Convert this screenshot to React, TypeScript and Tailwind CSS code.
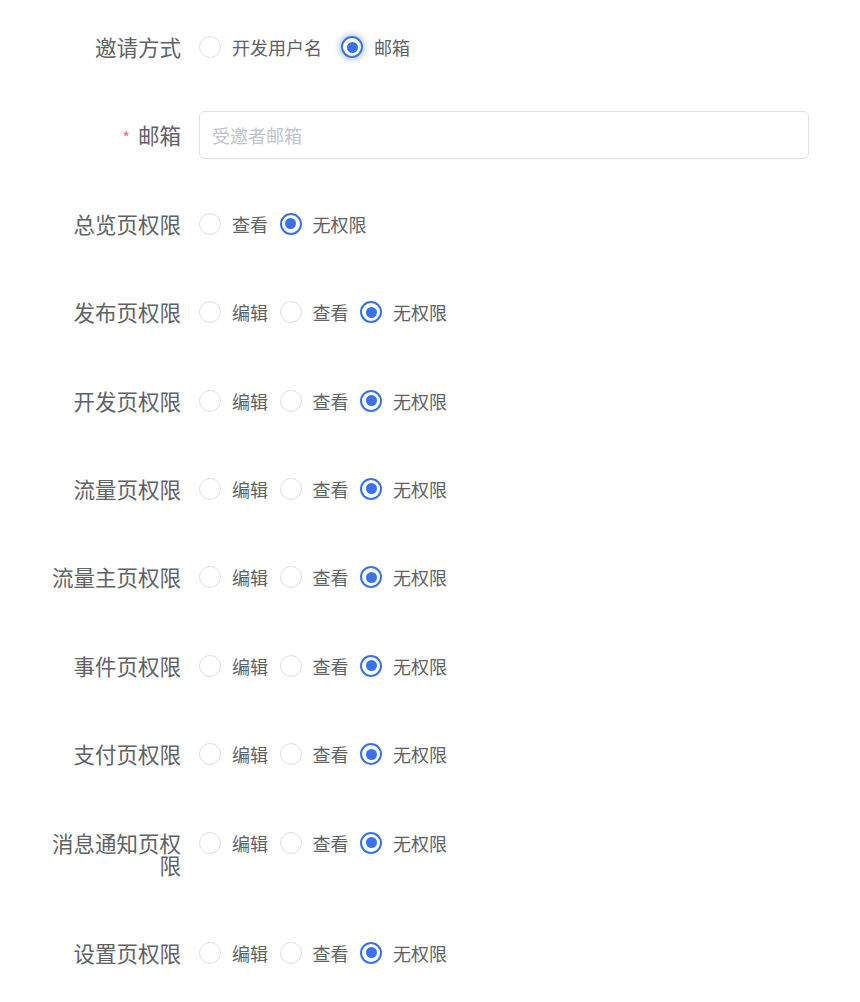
import React from 'react';

type Option = { label: string; checked?: boolean };

const FONT = { fontFamily: '"Noto Sans CJK SC", "Noto Sans", sans-serif' };

const Radio: React.FC<{ option: Option; glow?: boolean; gap: string }> = ({ option, glow, gap }) => (
    <label className={`flex items-center ${gap}`}>
        {option.checked ? (
            <span
                className={`w-[22px] h-[22px] rounded-full border-2 border-[#3a73e8] flex items-center justify-center bg-white ${
                    glow ? 'shadow-[0_0_4px_3px_rgba(58,115,232,0.25)]' : ''
                }`}
            >
                <span className="w-[11px] h-[11px] rounded-full bg-[#3a73e8]" />
            </span>
        ) : (
            <span className="w-[22px] h-[22px] rounded-full border border-[#dcdfe6] bg-white" />
        )}
        <span className="ml-[11px] text-[18px] leading-[22px] text-[#606266]">{option.label}</span>
    </label>
);

const FormRow: React.FC<{ label: string; required?: boolean; children: React.ReactNode }> = ({ label, required, children }) => (
    <div className="flex items-start mb-[40.4px]">
        <div className="ml-[49px] w-[132px] shrink-0 py-[13px] text-right text-[21.5px] leading-[22px] text-[#606266]">
            {required && <span className="inline-block text-[#f56c6c] text-[16px] leading-[16px] mr-[8px]">*</span>}
            {label}
        </div>
        <div className="ml-[18px] h-[48px] flex items-center">{children}</div>
    </div>
);

const permissions: { label: string; hasEdit: boolean }[] = [
    { label: '总览页权限', hasEdit: false },
    { label: '发布页权限', hasEdit: true },
    { label: '开发页权限', hasEdit: true },
    { label: '流量页权限', hasEdit: true },
    { label: '流量主页权限', hasEdit: true },
    { label: '事件页权限', hasEdit: true },
    { label: '支付页权限', hasEdit: true },
    { label: '消息通知页权限', hasEdit: true },
    { label: '设置页权限', hasEdit: true },
];

export default function App() {
    return (
        <div className="min-h-screen bg-white pt-[23px]" style={FONT}>
            <FormRow label="邀请方式">
                <Radio option={{ label: '开发用户名' }} gap="mr-[19px]" />
                <Radio option={{ label: '邮箱', checked: true }} glow gap="" />
            </FormRow>

            <FormRow label="邮箱" required>
                <input
                    className="w-[610px] h-[48px] border border-[#dcdfe6] rounded-[6px] px-[12px] text-[18px] text-[#606266] outline-none placeholder:text-[#c0c4cc]"
                    placeholder="受邀者邮箱"
                    style={FONT}
                />
            </FormRow>

            {permissions.map((p) => (
                <FormRow key={p.label} label={p.label}>
                    {p.hasEdit && <Radio option={{ label: '编辑' }} gap="mr-[11.5px]" />}
                    <Radio option={{ label: '查看' }} gap="mr-[11.5px]" />
                    <Radio option={{ label: '无权限', checked: true }} gap="" />
                </FormRow>
            ))}
        </div>
    );
}
